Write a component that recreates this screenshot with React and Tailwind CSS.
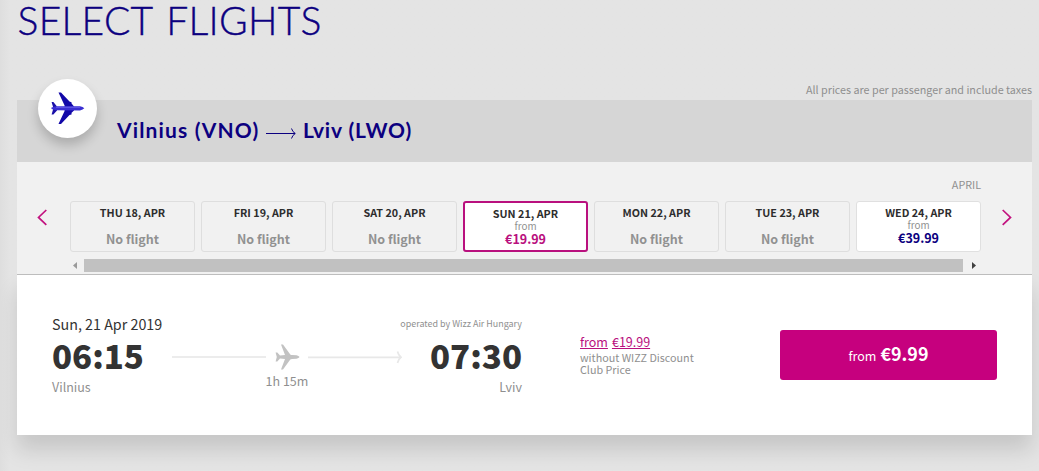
import React from "react";

const days = [
  { date: "THU 18, APR" },
  { date: "FRI 19, APR" },
  { date: "SAT 20, APR" },
  { date: "SUN 21, APR", price: "€19.99", selected: true },
  { date: "MON 22, APR" },
  { date: "TUE 23, APR" },
  { date: "WED 24, APR", price: "€39.99" },
];

function DayCard({ date, price, selected }) {
  const frame = selected
    ? "border-2 border-[#b9107e] bg-white pt-[4px]"
    : price
      ? "border border-[#e0e0e0] bg-white pt-[4px]"
      : "border border-[#dedede] bg-[#f1f1f1] pt-[4px]";
  return (
    <div className={"flex h-[51px] w-[125px] flex-col items-center rounded-[3px] " + frame}>
      <span className="h-[14px] text-[10.75px] leading-[14px] font-bold text-[#2d2d2d]">{date}</span>
      {price ? (
        <>
          <span className="h-[11px] text-[9.85px] leading-[11px] text-[#8f8f8f]">from</span>
          <span
            className={
              selected
                ? "text-[12.5px] leading-[14px] font-bold text-[#b9107e]"
                : "text-[12.5px] leading-[14px] font-bold text-[#0c0080]"
            }
          >
            {price}
          </span>
        </>
      ) : (
        <span className="mt-[10px] text-[12.5px] leading-[18px] font-bold text-[#919191]">No flight</span>
      )}
    </div>
  );
}

function BluePlane() {
  return (
    <svg className="ml-px" width="34" height="33" viewBox="0 0 34 33">
      <path d="M7.5 0.6 L10 0.6 L18.5 9.5 L20.5 10.2 L20.6 11.6 L23 14.5 L23 18.5 L20.6 20.8 L20.5 22.4 L18.5 23 L10 32 L7.5 32 L13.6 19 L13.6 13.5 Z" fill="#1208a8" />
      <path d="M0.6 10 L2.4 10 L6 14.5 L6 18.5 L2.4 22.6 L0.6 22.6 L2.2 17 L2.2 15.6 Z" fill="#1a10a8" />
      <path d="M0.5 15.6 L5 14.3 L29 14.2 Q32 14.8 33.3 16.3 Q32 17.8 29 18.4 L5 18.3 L0.5 17 Z" fill="#3a2fd2" />
      <path d="M5 15.2 H29" stroke="#6a61ec" strokeWidth="1" />
    </svg>
  );
}

function GreyPlane() {
  return (
    <svg width="25" height="26" viewBox="0 0 25 26">
      <path
        d="M6 0.6 L8 0.6 L15.3 10.4 Q16 11 17 11 L21.5 11.2 Q23.8 11.8 24.6 13 Q23.8 14.2 21.5 14.8 L17 15 Q16 15 15.3 15.6 L8 25.4 L6 25.4 L10 15 L5 14.6 L2.3 17.6 L0.6 17.6 L1.8 13 L0.6 8.4 L2.3 8.4 L5 11.4 L10 11 Z"
        fill="#c2c2c2"
      />
    </svg>
  );
}

export default function App() {
  return (
    <div className="h-[471px] w-[1039px] overflow-hidden bg-[#e4e4e4] bg-linear-to-r from-[#dedede] to-[#e4e4e4] to-[10px] pr-[7px] pl-[17px] font-['Noto_Sans_CJK_SC',sans-serif] text-[#8f8f8f]">
      <header className="flex h-[100px] flex-col whitespace-nowrap">
        <h1 className="h-[44px] pl-[0.5px] font-['Lato',sans-serif] text-[39px] leading-[41px] font-light tracking-[0.3px] text-[#0c0080] [-webkit-text-stroke:0.4px_#0c0080] [word-spacing:3px]">
          SELECT FLIGHTS
        </h1>
        <p className="mt-[38px] text-right text-[10.75px] leading-[15px]">
          All prices are per passenger and include taxes
        </p>
      </header>

      <main className="h-[335px] w-[1015px]">
        <section className="relative z-10 flex h-[62px] items-start bg-[#d6d6d6] pl-[20.5px]">
          <div className="-mt-[21px] flex h-[59px] w-[59px] shrink-0 items-center justify-center rounded-full bg-white shadow-[0_7px_12px_rgba(0,0,0,0.2)]">
            <BluePlane />
          </div>
          <h2 className="ml-[20.5px] flex h-[62px] items-center font-['Lato',sans-serif] text-[21px] font-bold whitespace-nowrap text-[#0c0080]">
            <span className="-mt-[2px] w-[149px] tracking-[1.15px]">Vilnius (VNO)</span>
            <svg className="mt-[4px] mr-[7px]" width="30" height="12" viewBox="0 0 30 12" fill="none" stroke="#0c0080">
              <path d="M0 6.5 H29" strokeWidth="1" />
              <path d="M25.5 1.5 Q26.5 5 29.3 6.5 Q26.5 8 25.5 11.5" strokeWidth="1" />
            </svg>
            <span className="-mt-[2px] tracking-[0.85px]">Lviv (LWO)</span>
          </h2>
        </section>

        <section className="relative z-10 flex h-[113px] flex-col border-b border-[#bdbdbd] bg-[#f1f1f1]">
          <div className="mt-[15px] h-[24px] pr-[51px] text-right text-[10.75px] leading-[15px]">APRIL</div>
          <div className="flex h-[51px] items-start">
            <button className="flex w-[53px] pt-[8px] pl-[20px]">
              <svg width="11" height="17" viewBox="0 0 11 17" fill="none" stroke="#c2127f" strokeWidth="1.7">
                <path d="M9.3 1 L1.5 8.4 L9.3 15.8" />
              </svg>
            </button>
            <div className="flex gap-[6px] whitespace-nowrap">
              {days.map((d) => (
                <DayCard key={d.date} {...d} />
              ))}
            </div>
            <button className="pt-[8px] pl-[20px]">
              <svg width="11" height="17" viewBox="0 0 11 17" fill="none" stroke="#c2127f" strokeWidth="1.7">
                <path d="M1.7 1 L9.5 8.4 L1.7 15.8" />
              </svg>
            </button>
          </div>
          <div className="mt-[7px] ml-[53px] flex h-[13px] w-[911px] items-center">
            <svg className="ml-[2px]" width="12" height="13" viewBox="0 0 12 13">
              <path d="M5 3 V10 L1 6.5 Z" fill="#9a9a9a" />
            </svg>
            <div className="h-[13px] w-[879px] bg-[#c1c1c1]" />
            <svg className="ml-[5px]" width="12" height="13" viewBox="0 0 12 13">
              <path d="M4 3 V10 L8 6.5 Z" fill="#404040" />
            </svg>
          </div>
        </section>

        <section className="flex h-[160px] bg-white pl-[35px] whitespace-nowrap shadow-[0_15px_20px_rgba(0,0,0,0.13)]">
          <div className="flex w-[120px] flex-col pt-[40px]">
            <span className="text-[14.3px] leading-[18px] text-[#333]">Sun, 21 Apr 2019</span>
            <span className="mt-[4px] text-[33px] leading-[36px] font-black text-[#333]">06:15</span>
            <span className="mt-[6px] text-[12.5px] leading-[16px]">Vilnius</span>
          </div>
          <div className="flex w-[230px] flex-col items-center pt-[68px]">
            <div className="flex h-[27px] w-full items-center">
              <div className="h-[2px] w-[94px] bg-[#ececec]" />
              <div className="mr-[8px] ml-[9px]">
                <GreyPlane />
              </div>
              <svg width="94" height="14" viewBox="0 0 94 14" fill="none" stroke="#e8e8e8" strokeWidth="1.7">
                <path d="M0 7.3 H92 M89.5 1.5 Q90.5 5.5 93 7.3 Q90.5 9 89.5 13" />
              </svg>
            </div>
            <span className="mt-[3px] text-[12.5px] leading-[16px]">1h 15m</span>
          </div>
          <div className="flex w-[120px] flex-col items-end pt-[40px]">
            <span className="h-[18px] text-[8.95px] leading-[17px]">operated by Wizz Air Hungary</span>
            <span className="mt-[4px] text-[33px] leading-[36px] font-black text-[#333]">07:30</span>
            <span className="mt-[6px] text-[12.5px] leading-[16px]">Lviv</span>
          </div>
          <div className="ml-[58px] flex w-[200px] flex-col items-start pt-[58px]">
            <div className="flex gap-[4px] text-[12.5px] leading-[18px] text-[#b9107e]">
              <span className="underline">from</span>
              <span className="underline">€19.99</span>
            </div>
            <p className="mt-px text-[10.75px] leading-[12px]">
              without WIZZ Discount
              <br />
              Club Price
            </p>
          </div>
          <button className="mt-[55px] flex h-[50px] w-[217px] items-baseline justify-center gap-[4px] rounded-[3px] bg-[#c6007e] pt-[9px] leading-[28px] text-white">
            <span className="text-[12.5px]">from</span>
            <span className="text-[17.9px] font-bold">€9.99</span>
          </button>
        </section>
      </main>
    </div>
  );
}
